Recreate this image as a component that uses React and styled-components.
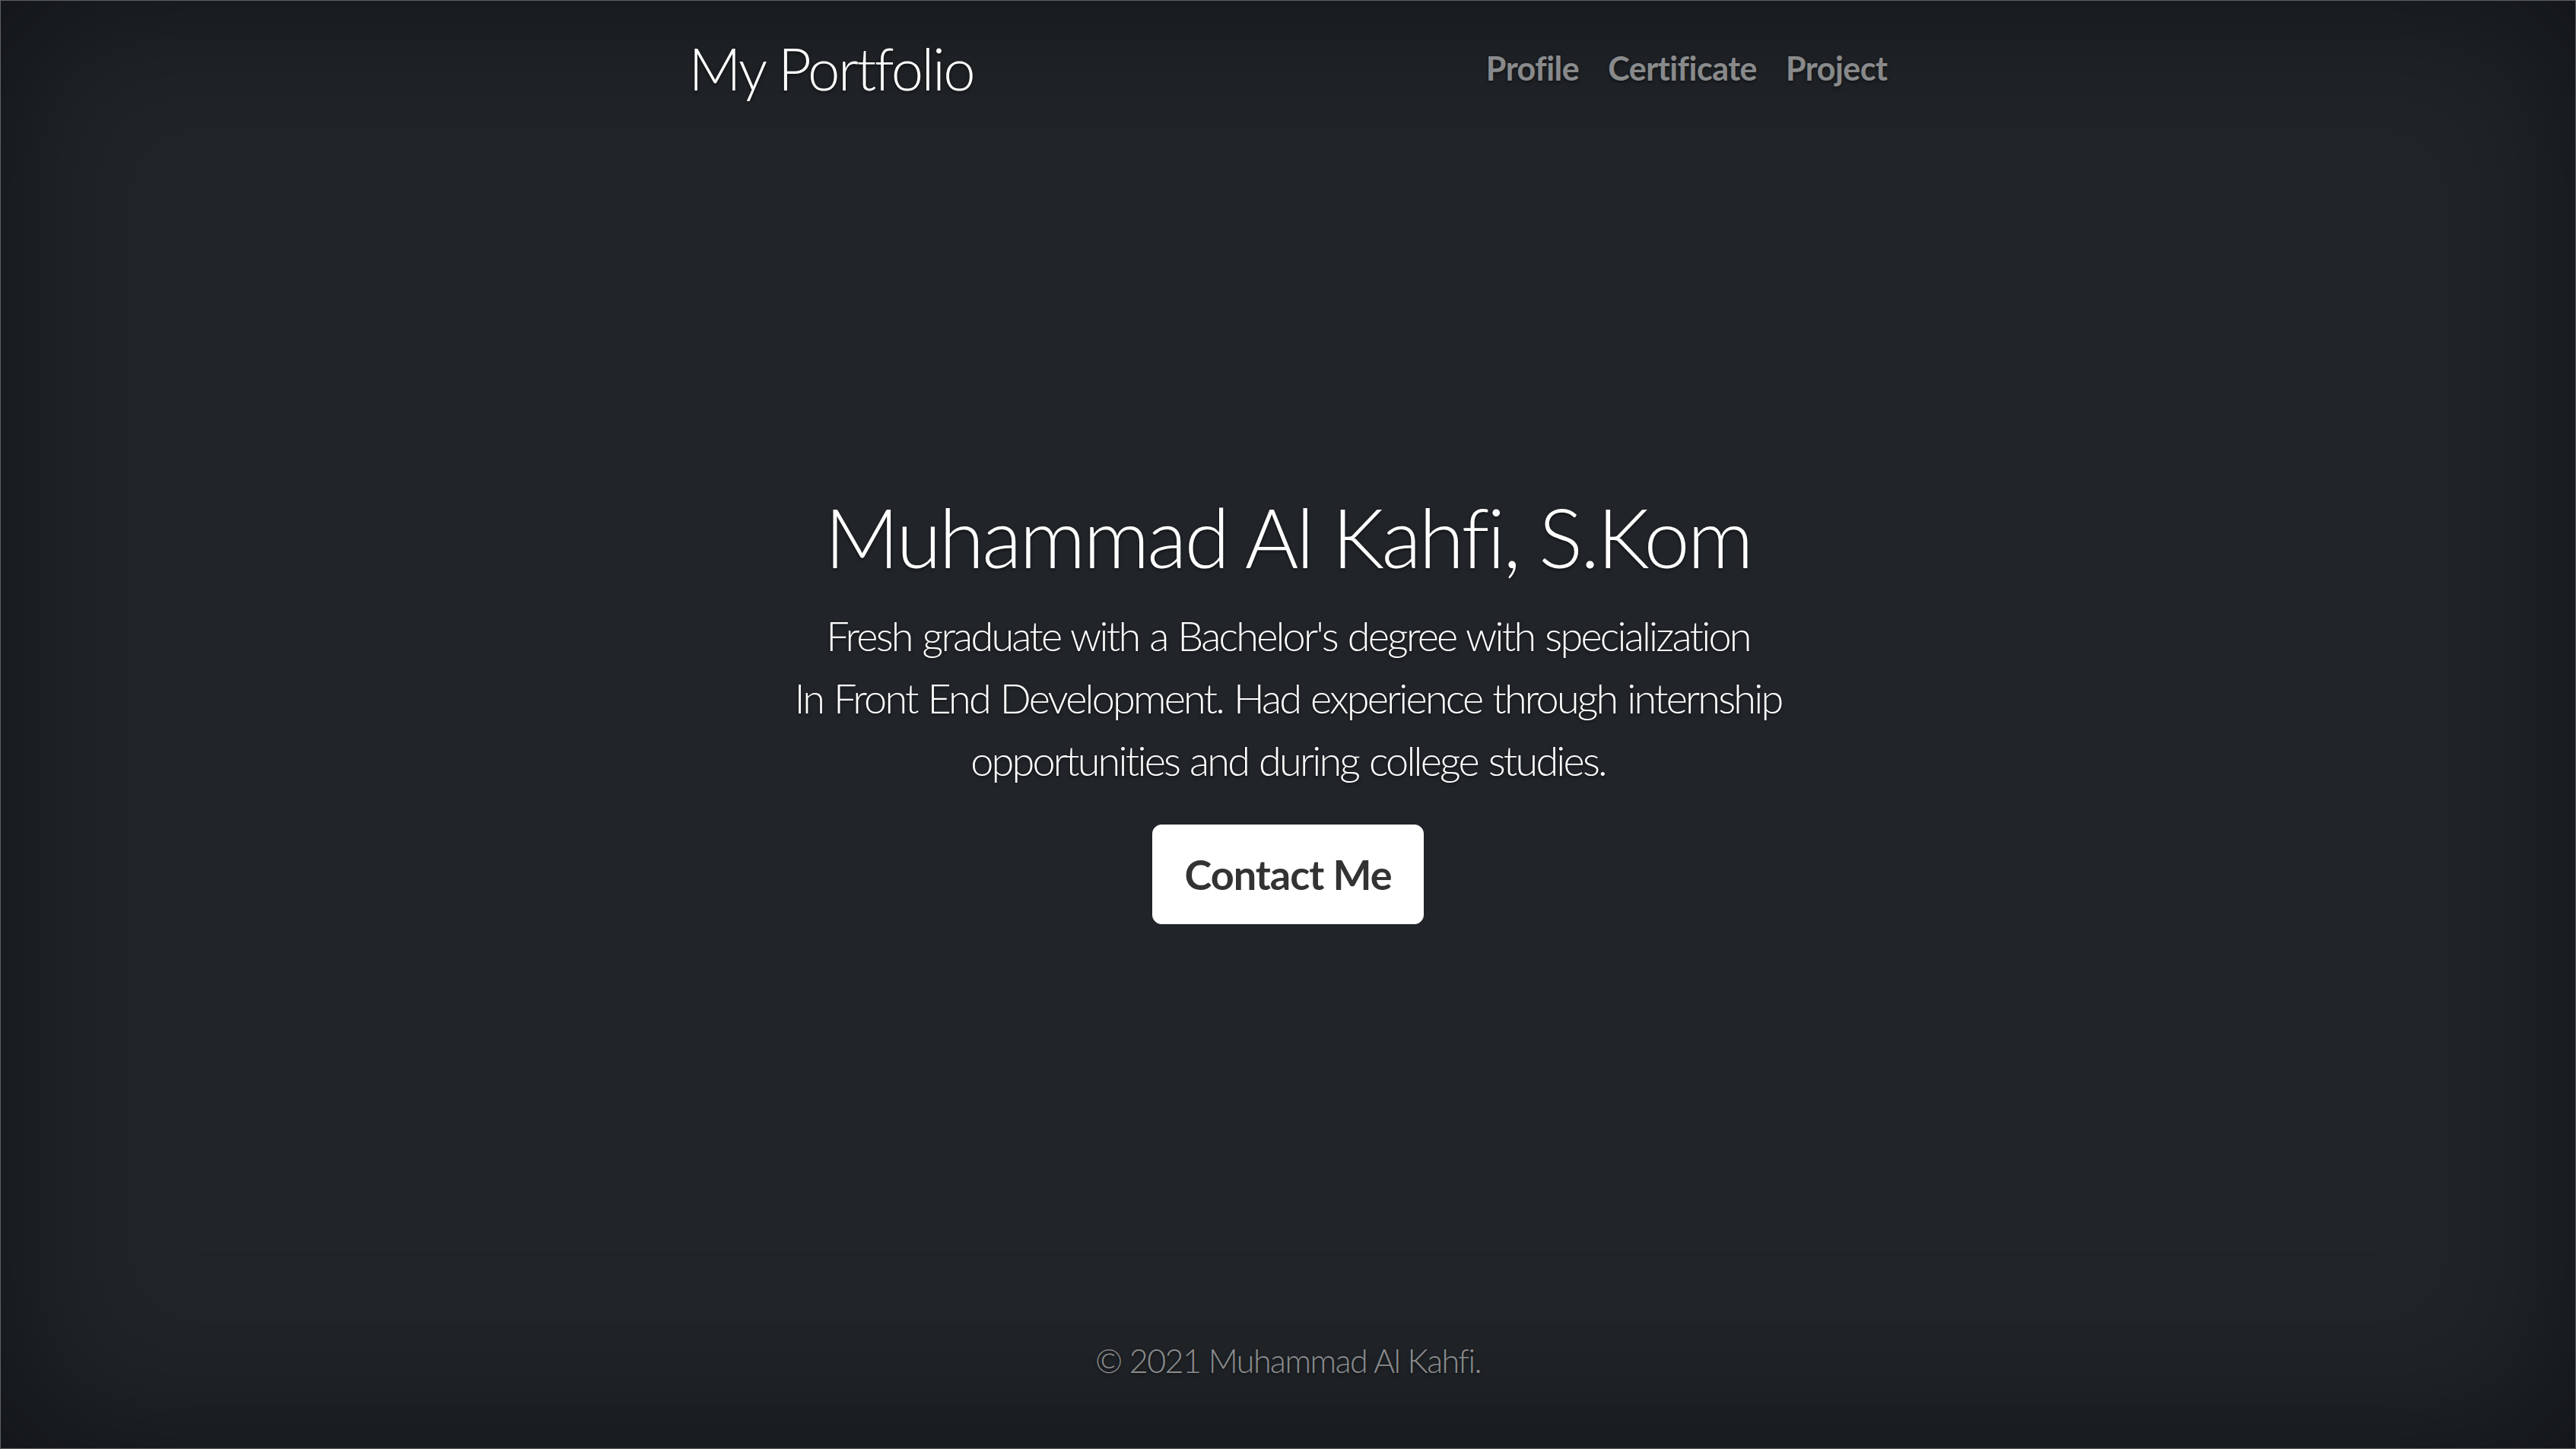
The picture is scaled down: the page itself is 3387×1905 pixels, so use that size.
import React from 'react';
import styled, { createGlobalStyle } from 'styled-components';

const GlobalStyle = createGlobalStyle`
    html, body {
        margin: 0;
        height: 100%;
        background-color: #212529;
    }
    body {
        font-family: Lato, "Open Sans", "Liberation Sans", sans-serif;
    }
    * {
        box-sizing: border-box;
    }
`;

const App = () => {
    return (
        <>
            <GlobalStyle />
            <Cover>
                <div className="cover-container">
                    <header className="masthead">
                        <h3 className="brand">My Portfolio</h3>
                        <nav className="nav">
                            <a href="#">Profile</a>
                            <a href="#">Certificate</a>
                            <a href="#">Project</a>
                        </nav>
                    </header>

                    <main className="hero">
                        <h1>Muhammad Al Kahfi, S.Kom</h1>
                        <p className="lead">
                            Fresh graduate with a Bachelor's degree with specialization
                            <br />
                            In Front End Development. Had experience through internship
                            <br />
                            opportunities and during college studies.
                        </p>
                        <ContactButton type="button">Contact Me</ContactButton>
                    </main>

                    <footer className="footer">
                        <p>&copy; 2021 Muhammad Al Kahfi.</p>
                    </footer>
                </div>
            </Cover>
        </>
    );
};

const Cover = styled.div`
    min-height: 100vh;
    display: flex;
    color: #fff;
    text-shadow: 0 2px 4px rgba(0, 0, 0, 0.5);
    box-shadow: inset 0 0 216px rgba(0, 0, 0, 0.5);
    border: 1px solid #5d6166;
    padding: 43px 43px 0;

    .cover-container {
        width: 100%;
        max-width: 1576px;
        margin: 0 auto;
        display: flex;
        flex-direction: column;
    }

    .masthead {
        display: flex;
        justify-content: space-between;
        align-items: center;
        margin-bottom: auto;

        .brand {
            margin: 0;
            font-size: 76px;
            font-weight: 300;
            line-height: 1.2;
            letter-spacing: -2.5px;
        }

        .nav {
            display: flex;
            gap: 38px;

            a {
                color: rgba(255, 255, 255, 0.5);
                font-weight: 700;
                font-size: 43px;
                letter-spacing: -0.5px;
                text-decoration: none;
                padding: 11px 0;
            }
        }
    }

    .hero {
        text-align: center;
        padding: 0 43px 42px;

        h1 {
            margin: 0 0 24px;
            font-size: 108px;
            font-weight: 300;
            line-height: 1.2;
            letter-spacing: -3px;
        }

        .lead {
            margin: 0 0 43px;
            font-size: 54px;
            font-weight: 300;
            line-height: 1.52;
            letter-spacing: -2.8px;
            word-spacing: 2px;
        }
    }

    .footer {
        margin-top: auto;
        text-align: center;
        color: rgba(255, 255, 255, 0.5);

        p {
            margin: 0 0 90px;
            font-size: 43px;
            font-weight: 300;
            letter-spacing: -1.5px;
        }
    }
`;

const ContactButton = styled.button`
    background-color: #fff;
    color: #333;
    border: 1px solid #fff;
    border-radius: 12px;
    padding: 24px 41px;
    font-family: inherit;
    font-size: 54px;
    font-weight: 700;
    line-height: 1.5;
    letter-spacing: -1px;
    text-shadow: none;
    cursor: pointer;
`;

export default App;
